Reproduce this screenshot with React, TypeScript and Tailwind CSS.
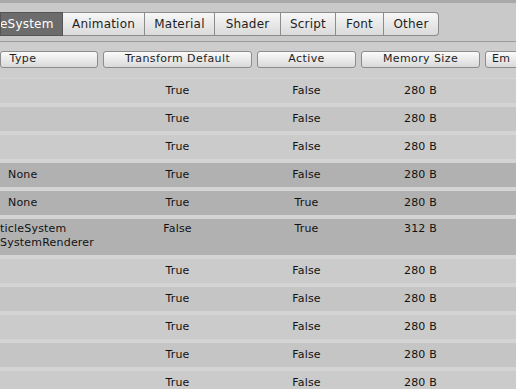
import React from "react";

type Row = {
  type: string[];
  transform: string;
  active: string;
  size: string;
  selected?: boolean;
};

const rows: Row[] = [
  { type: [], transform: "True", active: "False", size: "280 B" },
  { type: [], transform: "True", active: "False", size: "280 B" },
  { type: [], transform: "True", active: "False", size: "280 B" },
  { type: ["None"], transform: "True", active: "False", size: "280 B", selected: true },
  { type: ["None"], transform: "True", active: "True", size: "280 B", selected: true },
  { type: ["ticleSystem", "SystemRenderer"], transform: "False", active: "True", size: "312 B", selected: true },
  { type: [], transform: "True", active: "False", size: "280 B" },
  { type: [], transform: "True", active: "False", size: "280 B" },
  { type: [], transform: "True", active: "False", size: "280 B" },
  { type: [], transform: "True", active: "False", size: "280 B" },
  { type: [], transform: "True", active: "False", size: "280 B" },
];

const tabs = ["Animation", "Material", "Shader", "Script", "Font", "Other"];

function HeaderButton({ label, className }: { label: string; className: string }) {
  return (
    <div className={`shrink-0 px-[2.5px] ${className}`}>
      <div className="flex h-[17px] items-center justify-center rounded-[3px] border border-[#8c8c8c] bg-gradient-to-b from-[#fbfbfb] to-[#d9d9d9] text-[11px] tracking-[0.4px] text-[#1e1e1e]">
        {label}
      </div>
    </div>
  );
}

export default function App() {
  return (
    <div
      className="h-[389px] w-[516px] overflow-hidden bg-[#c9c9c9] text-[11px] tracking-[0.2px] text-[#111]"
      style={{ fontFamily: '"DejaVu Sans", Verdana, sans-serif' }}
    >
      <div className="h-[3px] bg-[#a9a9a9]" />
      <div className="flex pt-[9px]">
        <div className="flex h-[24px] w-[63px] shrink-0 items-center overflow-hidden border border-[#555] bg-[#6c6c6c] text-[12px] text-white">
          <span className="-ml-[1px]">eSystem</span>
        </div>
        {tabs.map((t, i) => (
          <div
            key={t}
            className={`flex h-[24px] shrink-0 items-center justify-center border-y border-r border-[#8c8c8c] bg-gradient-to-b from-[#f7f7f7] to-[#dadada] text-[12px] text-[#1e1e1e] ${
              i === tabs.length - 1 ? "rounded-r-[4px]" : ""
            } ${["w-[82px]", "w-[70px]", "w-[66px]", "w-[55px]", "w-[48px]", "w-[55px]"][i]}`}
          >
            {t}
          </div>
        ))}
      </div>
      <div className="mt-[5px] h-px bg-[#9b9b9b]" />
      <div className="bg-[#cdcdcd] pt-[9px] pb-[10px]">
        <div className="flex -ml-[3px]">
          <HeaderButton label="Type" className="w-[103.5px] [&>div]:justify-start [&>div]:pl-[9px]" />
          <HeaderButton label="Transform Default" className="w-[154px]" />
          <HeaderButton label="Active" className="w-[104px]" />
          <HeaderButton label="Memory Size" className="w-[124px]" />
          <HeaderButton label="Em" className="w-[124px] [&>div]:justify-start [&>div]:pl-[6px]" />
        </div>
      </div>
      <div className="flex flex-col gap-[4px] bg-[#d4d4d4] pt-[1px]">
        {rows.map((r, i) => {
          const tall = r.type.length > 1;
          const bg = r.selected ? "bg-[#b1b1b1]" : i % 2 === 0 ? "bg-[#cbcbcb]" : "bg-[#c5c5c5]";
          return (
            <div
              key={i}
              className={`flex shrink-0 ${bg} ${tall ? "h-[36px] items-start pt-[3px]" : "h-[24px] items-center"}`}
            >
              <div className="flex w-[100.5px] shrink-0 flex-col leading-[14px]">
                {r.type.map((t, j) => (
                  <span key={j} className={r.type.length > 1 ? "pl-0" : "pl-[8px]"}>
                    {t}
                  </span>
                ))}
              </div>
              <div className="w-[154px] shrink-0 text-center leading-[14px]">{r.transform}</div>
              <div className="w-[104px] shrink-0 text-center leading-[14px]">{r.active}</div>
              <div className="w-[124px] shrink-0 text-center leading-[14px]">{r.size}</div>
            </div>
          );
        })}
      </div>
    </div>
  );
}
